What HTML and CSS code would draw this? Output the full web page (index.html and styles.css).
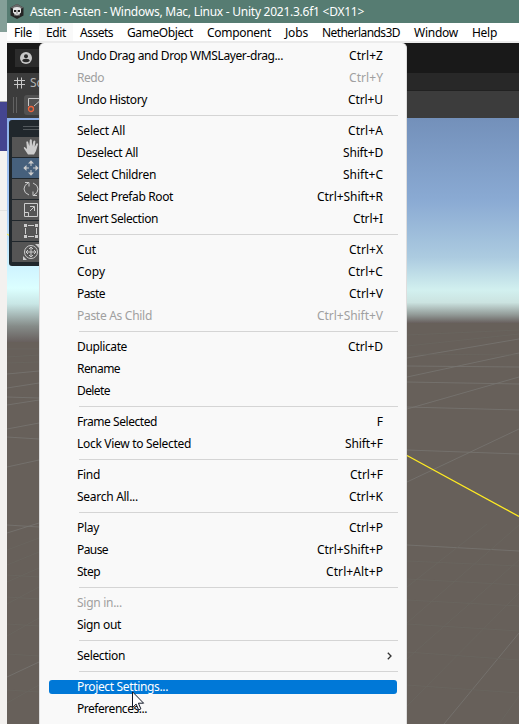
FILE: index.html
```html
<!DOCTYPE html>
<html lang="en">
<head>
<meta charset="utf-8">
<title>Asten - Unity</title>
<link rel="stylesheet" href="styles.css">
</head>
<body>
<div class="desktop">
  <aside class="behind"><div class="b-title"></div><div class="b-light"></div><div class="b-purple"></div><div class="b-page"></div><div class="b-rest"></div></aside>
  <main class="window">
    <header class="titlebar">
      <svg class="logo" width="14" height="15" viewBox="0 0 14 15"><path d="M7 0l6.500 3.500v8L7 15 .5 11.500v-8z" fill="#242424"/><path d="M7 0l6.500 3.500L7 7 .5 3.500z" fill="#6b6b6b"/><path d="M3 5Q3 3 7 3t4 2v3.500L9.500 10v1.500h-5V10L3 8.500z" fill="#e4e4e4"/><path d="M4 6h2.300v2H4zM7.700 6H10v2H7.700zM6.500 8.500h1v1h-1z" fill="#222"/><path d="M5.500 10.500v1.500M7 10.500v1.500M8.500 10.500v1.500" stroke="#333" stroke-width=".5"/></svg>
      <span data-w="334">Asten - Asten - Windows, Mac, Linux - Unity 2021.3.6f1 &lt;DX11&gt;</span>
    </header>
    <nav class="menubar">
      <span class="m"><b data-w="18">File</b></span><span class="m open"><b data-w="20">Edit</b></span><span class="m"><b data-w="33">Assets</b></span><span class="m"><b data-w="66">GameObject</b></span><span class="m"><b data-w="64">Component</b></span><span class="m"><b data-w="23">Jobs</b></span><span class="m"><b data-w="78">Netherlands3D</b></span><span class="m"><b data-w="44">Window</b></span><span class="m"><b data-w="25">Help</b></span>
    </nav>
    <div class="account"><span class="account-btn"><svg width="12" height="12" viewBox="0 0 12 12"><circle cx="6" cy="6" r="6" fill="#c8c8c8"/><circle cx="6" cy="4.200" r="2" fill="#2a2a2a"/><path d="M2.300 9q0-2.200 3.700-2.200T9.700 9Q8.300 10.300 6 10.300T2.300 9z" fill="#2a2a2a"/></svg></span></div>
    <div class="tabs"><span class="tab"><svg width="11" height="12" viewBox="0 0 11 12" stroke="#c8c8c8" fill="none"><path d="M3.500.5v11M7.500.5v11M0 3.500h11M0 7.500h11"/></svg>Scene</span></div>
    <div class="tools"><i class="grip"></i><span class="toolbtn"><svg width="16" height="16" viewBox="0 0 16 16" fill="none" stroke="#c8c8c8"><path d="M1.500 9V1.500H16M7 9l8-7"/><circle cx="4" cy="12" r="2.500" stroke="#f0643c" stroke-width="1.300"/></svg></span></div>
    <section class="scene">
      <svg width="512" height="606" viewBox="7 118 512 606" fill="none">
        <defs>
          <linearGradient id="sl" x1="0" x2="0" y1="118" y2="342" gradientUnits="userSpaceOnUse"><stop offset="0" stop-color="#8baee8"/><stop offset=".4" stop-color="#a9cdfa"/><stop offset=".66" stop-color="#cef3ff"/><stop offset=".76" stop-color="#dcffff"/><stop offset=".83" stop-color="#c8e6e5"/><stop offset=".93" stop-color="#858b88"/><stop offset="1" stop-color="#68605e"/></linearGradient>
          <linearGradient id="sr" x1="0" x2="0" y1="118" y2="323" gradientUnits="userSpaceOnUse"><stop offset="0" stop-color="#7390ba"/><stop offset=".4" stop-color="#8aaad3"/><stop offset=".68" stop-color="#accbe0"/><stop offset=".84" stop-color="#d2f0ef"/><stop offset=".9" stop-color="#cbe3e0"/><stop offset=".96" stop-color="#929a97"/><stop offset="1" stop-color="#68605e"/></linearGradient>
        </defs>
        <path d="M7 118h512v606H7z" fill="#67605a"/>
        <path d="M7 118h40v224H7z" fill="url(#sl)"/>
        <path d="M400 118h119v205H400z" fill="url(#sr)"/>
        <g stroke="#777571" stroke-width=".8">
          <path d="M7 374l32-3M7 388l32-5M7 397l32 1M7 405l32-5M7 429l32-6M7 437l32 2M7 467l32-7M7 525l32 2M7 533l32-10M7 677l32-15"/>
          <path d="M407 358l112-19M407 377l112-24M407 409l112-32M407 366l112 1M407 407l112 3M407 382l112 2M407 450l112 4M407 482l112-53M407 545l112 6M444 724l75-91"/>
        </g>
        <g stroke="#69665f" stroke-width=".8">
          <path d="M7 349h32M7 357l32-2M7 363l32-1M7 550l32-12M7 565l32-13M7 582l32-14M7 604l32-17M7 636l32-18M7 703l32-18M7 575l32 2M7 597l32 2M7 624l32 2M7 654l32 2M7 690l32 2"/>
          <path d="M407 346l112-12M407 335l112-5M407 354l112 1M407 561l112 5M407 579l112 6M407 600l112 6M407 624l112 7M407 652l112 8M407 685l112 8M407 623l112-98M407 659l112-99M407 706l112-113M407 587l80-63M499 724l20-28"/>
        </g>
        <path d="M407 455.500l112 61" stroke="#ffeb22" stroke-width="1.300"/>
        <path d="M7 234l3 2" stroke="#ffeb22"/>
      </svg>
      <div class="palette">
        <div class="palette-grip"></div>
        <div class="tool"><svg viewBox="0 0 16 16"><path d="M5 15.500L1 9.500q-.6-1.300.6-1.600L4 10 3.300 3q.8-1.400 1.800 0L6.300 7 6.800 1q1-1.400 2 0l.3 6L10.500 2q1.200-1.100 1.900.3L11.700 8l1.800-3.500q1.300-.6 1.500.7L13 12l-2 3.500z" fill="#ccc" stroke="none"/></svg></div>
        <div class="tool on"><svg viewBox="0 0 16 16"><path d="M8 2v4M8 10v4M2 8h4M10 8h4"/><path d="M5 3.500L8 .3l3 3.200zM5 12.500l3 3.200 3-3.200zM3.500 5L.3 8l3.200 3zM12.500 5l3.200 3-3.200 3z" fill="#ccc" stroke="none"/></svg></div>
        <div class="tool"><svg viewBox="0 0 16 16"><path d="M6 14Q1 12 1 8t4-6M2 1.500h4v4M10 2q5 2 5 6t-4 6M14 14.500h-4v-4"/></svg></div>
        <div class="tool"><svg viewBox="0 0 16 16"><path d="M1.500 1.500h13v13h-13zM1.500 10.500h4v4M7 9l4-4M7 4.500h4.500V9"/></svg></div>
        <div class="tool"><svg viewBox="0 0 16 16"><path d="M2.500 5v6M13.500 5v6M5 2.500h6M5 13.500h6"/><path d="M1 1h3v3H1zM12 1h3v3h-3zM1 12h3v3H1zM12 12h3v3h-3z" fill="#ccc" stroke="none"/></svg></div>
        <div class="tool"><svg viewBox="0 0 16 16"><circle cx="8" cy="8" r="6.500"/><path d="M8 3v10M3 8h10M6 5l2-2 2 2M6 11l2 2 2-2M5 6L3 8l2 2M11 6l2 2-2 2"/><path d="M0 12v4h4zM12 0h4v4z" fill="#ccc" stroke="none"/></svg></div>
      </div>
    </section>
  </main>
  <div class="menu">
    <div class="row"><span data-w="206">Undo Drag and Drop WMSLayer-drag...</span><kbd data-w="34">Ctrl+Z</kbd></div>
    <div class="row off"><span data-w="27">Redo</span><kbd data-w="34">Ctrl+Y</kbd></div>
    <div class="row"><span data-w="70">Undo History</span><kbd data-w="35">Ctrl+U</kbd></div>
    <hr>
    <div class="row"><span data-w="48">Select All</span><kbd data-w="35">Ctrl+A</kbd></div>
    <div class="row"><span data-w="61">Deselect All</span><kbd data-w="40">Shift+D</kbd></div>
    <div class="row"><span data-w="79">Select Children</span><kbd data-w="40">Shift+C</kbd></div>
    <div class="row"><span data-w="96">Select Prefab Root</span><kbd data-w="66">Ctrl+Shift+R</kbd></div>
    <div class="row"><span data-w="81">Invert Selection</span><kbd data-w="30">Ctrl+I</kbd></div>
    <hr>
    <div class="row"><span data-w="19">Cut</span><kbd data-w="34">Ctrl+X</kbd></div>
    <div class="row"><span data-w="28">Copy</span><kbd data-w="35">Ctrl+C</kbd></div>
    <div class="row"><span data-w="28">Paste</span><kbd data-w="34">Ctrl+V</kbd></div>
    <div class="row off"><span data-w="75">Paste As Child</span><kbd data-w="66">Ctrl+Shift+V</kbd></div>
    <hr>
    <div class="row"><span data-w="50">Duplicate</span><kbd data-w="35">Ctrl+D</kbd></div>
    <div class="row"><span data-w="43">Rename</span></div>
    <div class="row"><span data-w="33">Delete</span></div>
    <hr>
    <div class="row"><span data-w="80">Frame Selected</span><kbd>F</kbd></div>
    <div class="row"><span data-w="114">Lock View to Selected</span><kbd data-w="38">Shift+F</kbd></div>
    <hr>
    <div class="row"><span data-w="23">Find</span><kbd data-w="33">Ctrl+F</kbd></div>
    <div class="row"><span data-w="61">Search All...</span><kbd data-w="34">Ctrl+K</kbd></div>
    <hr>
    <div class="row"><span data-w="22">Play</span><kbd data-w="34">Ctrl+P</kbd></div>
    <div class="row"><span data-w="31">Pause</span><kbd data-w="66">Ctrl+Shift+P</kbd></div>
    <div class="row"><span data-w="23">Step</span><kbd data-w="57">Ctrl+Alt+P</kbd></div>
    <hr>
    <div class="row off"><span data-w="45">Sign in...</span></div>
    <div class="row"><span data-w="44">Sign out</span></div>
    <hr>
    <div class="row sub"><span data-w="48">Selection</span><svg width="5" height="8" viewBox="0 0 5 8"><path d="M.8.8L4 4 .8 7.200" fill="none" stroke="#333" stroke-width="1.300"/></svg></div>
    <hr>
    <div class="row hot"><span data-w="91">Project Settings...</span></div>
    <div class="row"><span data-w="70">Preferences...</span></div>
  </div>
  <svg class="cursor" width="13" height="20" viewBox="0 0 13 20"><path d="M.5.8v15.700l3.600-3.400 2.500 5.800 2.300-1-2.500-5.700h5.200z" fill="#fff" stroke="#111827"/></svg>
</div>
<script src="fit.js"></script>
</body>
</html>
```
FILE: styles.css
```css
* { box-sizing: border-box; }
body { margin: 0; font: 12px/22px "Noto Sans", "Open Sans", sans-serif; color: #000; overflow: hidden; }
.desktop { position: relative; display: grid; grid-template-columns: 7px 512px; height: 724px; overflow: hidden; }
.behind { display: grid; grid-template-rows: 32px 70px 49px 60px 1fr; }
.b-title { background: #849f98; }
.b-light { background: #f8f8f8; border-bottom: 1px solid #aaa; }
.b-purple { background: #444590; }
.b-page { background: #f3f2f0; border-bottom: 1px solid #e4e3e1; }
.b-rest { background: #f3f1ef; }
.window { display: grid; grid-template-rows: 23px 20px 30px 18px 27px 606px; }
.titlebar { display: flex; align-items: center; gap: 6px; padding-left: 3px; background: #567c72; color: #fff; white-space: nowrap; }
.menubar { display: flex; background: #fff; border-bottom: 2px solid #ececec; line-height: 20px; }
.m { height: 18px; padding: 0 7px; white-space: nowrap; }
.m b { display: inline-block; font-weight: 400; }
.m.open { background: #f9f9f9; }
.account { padding: 6px 8px; background: #191919; }
.account-btn { display: flex; width: 34px; height: 18px; padding: 3px 5px; background: #2c2c2c; }
.tabs { background: #282828; border-bottom: 1px solid #212121; }
.tab { display: flex; align-items: center; gap: 5px; width: 60px; height: 18px; padding: 2px 0 0 7px; background: #3c3c3c; color: #b4b4b4; }
.tools { display: flex; align-items: center; gap: 7px; padding-left: 6px; background: #3c3c3c; }
.grip { width: 4px; height: 16px; border: solid #626262; border-width: 0 1px; }
.toolbtn { width: 32px; height: 20px; padding: 2px 3px; border-radius: 3px; background: #515151; }
.scene { position: relative; }
.scene > svg { display: block; }
.palette { position: absolute; left: 2px; top: 2px; display: flex; flex-direction: column; gap: 1px; width: 40px; height: 146px; padding: 6px 0 0 3px; border-radius: 3px; background: #20272c; }
.palette-grip { width: 24px; height: 4px; margin: 0 0 6px 11px; border: solid #53595d; border-width: 1px 0; }
.tool { display: flex; align-items: center; height: 20px; padding-left: 11px; background: #555; }
.tool.on { background: #46607c; }
.tool svg { width: 16px; height: 16px; flex: none; fill: none; stroke: #ccc; }
.menu { position: absolute; left: 39px; top: 43px; display: flex; flex-direction: column; width: 368px; height: 700px; padding-top: 2px; background: #f9f9f9; border: 0 solid #dedede; border-width: 0 1px; border-radius: 5px 5px 0 0; }
.row { display: flex; flex: none; justify-content: space-between; height: 22px; padding: 0 23px 0 37px; white-space: nowrap; }
.row kbd { font: inherit; }
.row.off { color: #a0a0a0; }
.row.sub { align-items: center; padding-right: 14px; }
.row.hot { height: 14px; margin: 4px 9px; padding-left: 28px; line-height: 14px; border-radius: 3px; background: #0078d7; color: #fff; }
hr { flex: none; height: 1px; margin: 4px 8px 4px 39px; border: 0; background: #d5d5d5; }
.cursor { position: absolute; left: 132px; top: 691px; }
```
FILE: fit.js
```js
// Tighten each label's tracking so it occupies its nominal width.
document.querySelectorAll('[data-w]').forEach(function (el) {
  var target = Number(el.dataset.w);
  var n = el.textContent.length;
  var range = document.createRange();
  range.selectNodeContents(el);
  var width = range.getBoundingClientRect().width;
  el.style.letterSpacing = ((target - width) / n) + 'px';
});
```
